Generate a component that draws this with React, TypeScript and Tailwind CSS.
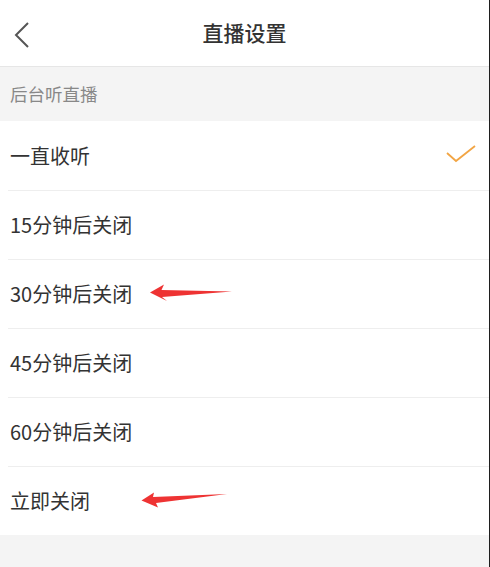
const font = { fontFamily: '"Noto Sans CJK SC", "Noto Sans", sans-serif' };

const options = ['一直收听', '15分钟后关闭', '30分钟后关闭', '45分钟后关闭', '60分钟后关闭', '立即关闭'];

function Arrow({ variant }: { variant: 'a' | 'b' }) {
  if (variant === 'a') {
    return (
      <svg className="absolute left-0 top-0" width="490" height="69" viewBox="0 259 490 69">
        <path d="M150 292.5 L164 284.5 L161.5 290 L232 291.5 L162 297 L167 301 Z" fill="#ee3333" />
      </svg>
    );
  }
  return (
    <svg className="absolute left-0 top-0" width="490" height="69" viewBox="0 466 490 69">
      <path d="M141.5 500.5 L154 492.5 L153 497 L227 494 L156 503 L158 507.5 Z" fill="#ee3333" />
    </svg>
  );
}

export default function App() {
  return (
    <div className="flex h-[567px] w-[490px] flex-col border-r border-[#1e1e1e] bg-[#f4f4f4]" style={font}>
      <header className="relative flex h-[67px] shrink-0 items-center justify-center border-b border-[#e6e6e6] bg-white">
        <svg className="absolute left-[13px] top-[21px]" width="18" height="28" viewBox="0 0 18 28">
          <path d="M15 2 L3 14 L15 26" fill="none" stroke="#555" strokeWidth="2" />
        </svg>
        <h1 className="text-[21px] font-medium text-[#333]">直播设置</h1>
      </header>
      <div className="flex h-[54px] shrink-0 items-center pl-[10px] text-[17.5px] text-[#888]">后台听直播</div>
      <ul className="bg-white">
        {options.map((label, i) => (
          <li key={label} className="relative h-[69px] pl-[8px]">
            <div className={`flex h-full items-center justify-between pl-[2px] pr-[12px] ${i > 0 ? 'border-t border-[#eeeeee]' : ''}`}>
              <span className="text-[20px] text-[#333]">{label}</span>
              {i === 0 && (
                <svg width="32" height="22" viewBox="0 0 32 22">
                  <path d="M2 8 L11 16 L30 1" fill="none" stroke="#f2a544" strokeWidth="1.8" />
                </svg>
              )}
            </div>
            {i === 2 && <Arrow variant="a" />}
            {i === 5 && <Arrow variant="b" />}
          </li>
        ))}
      </ul>
      <div className="flex-1" />
    </div>
  );
}
